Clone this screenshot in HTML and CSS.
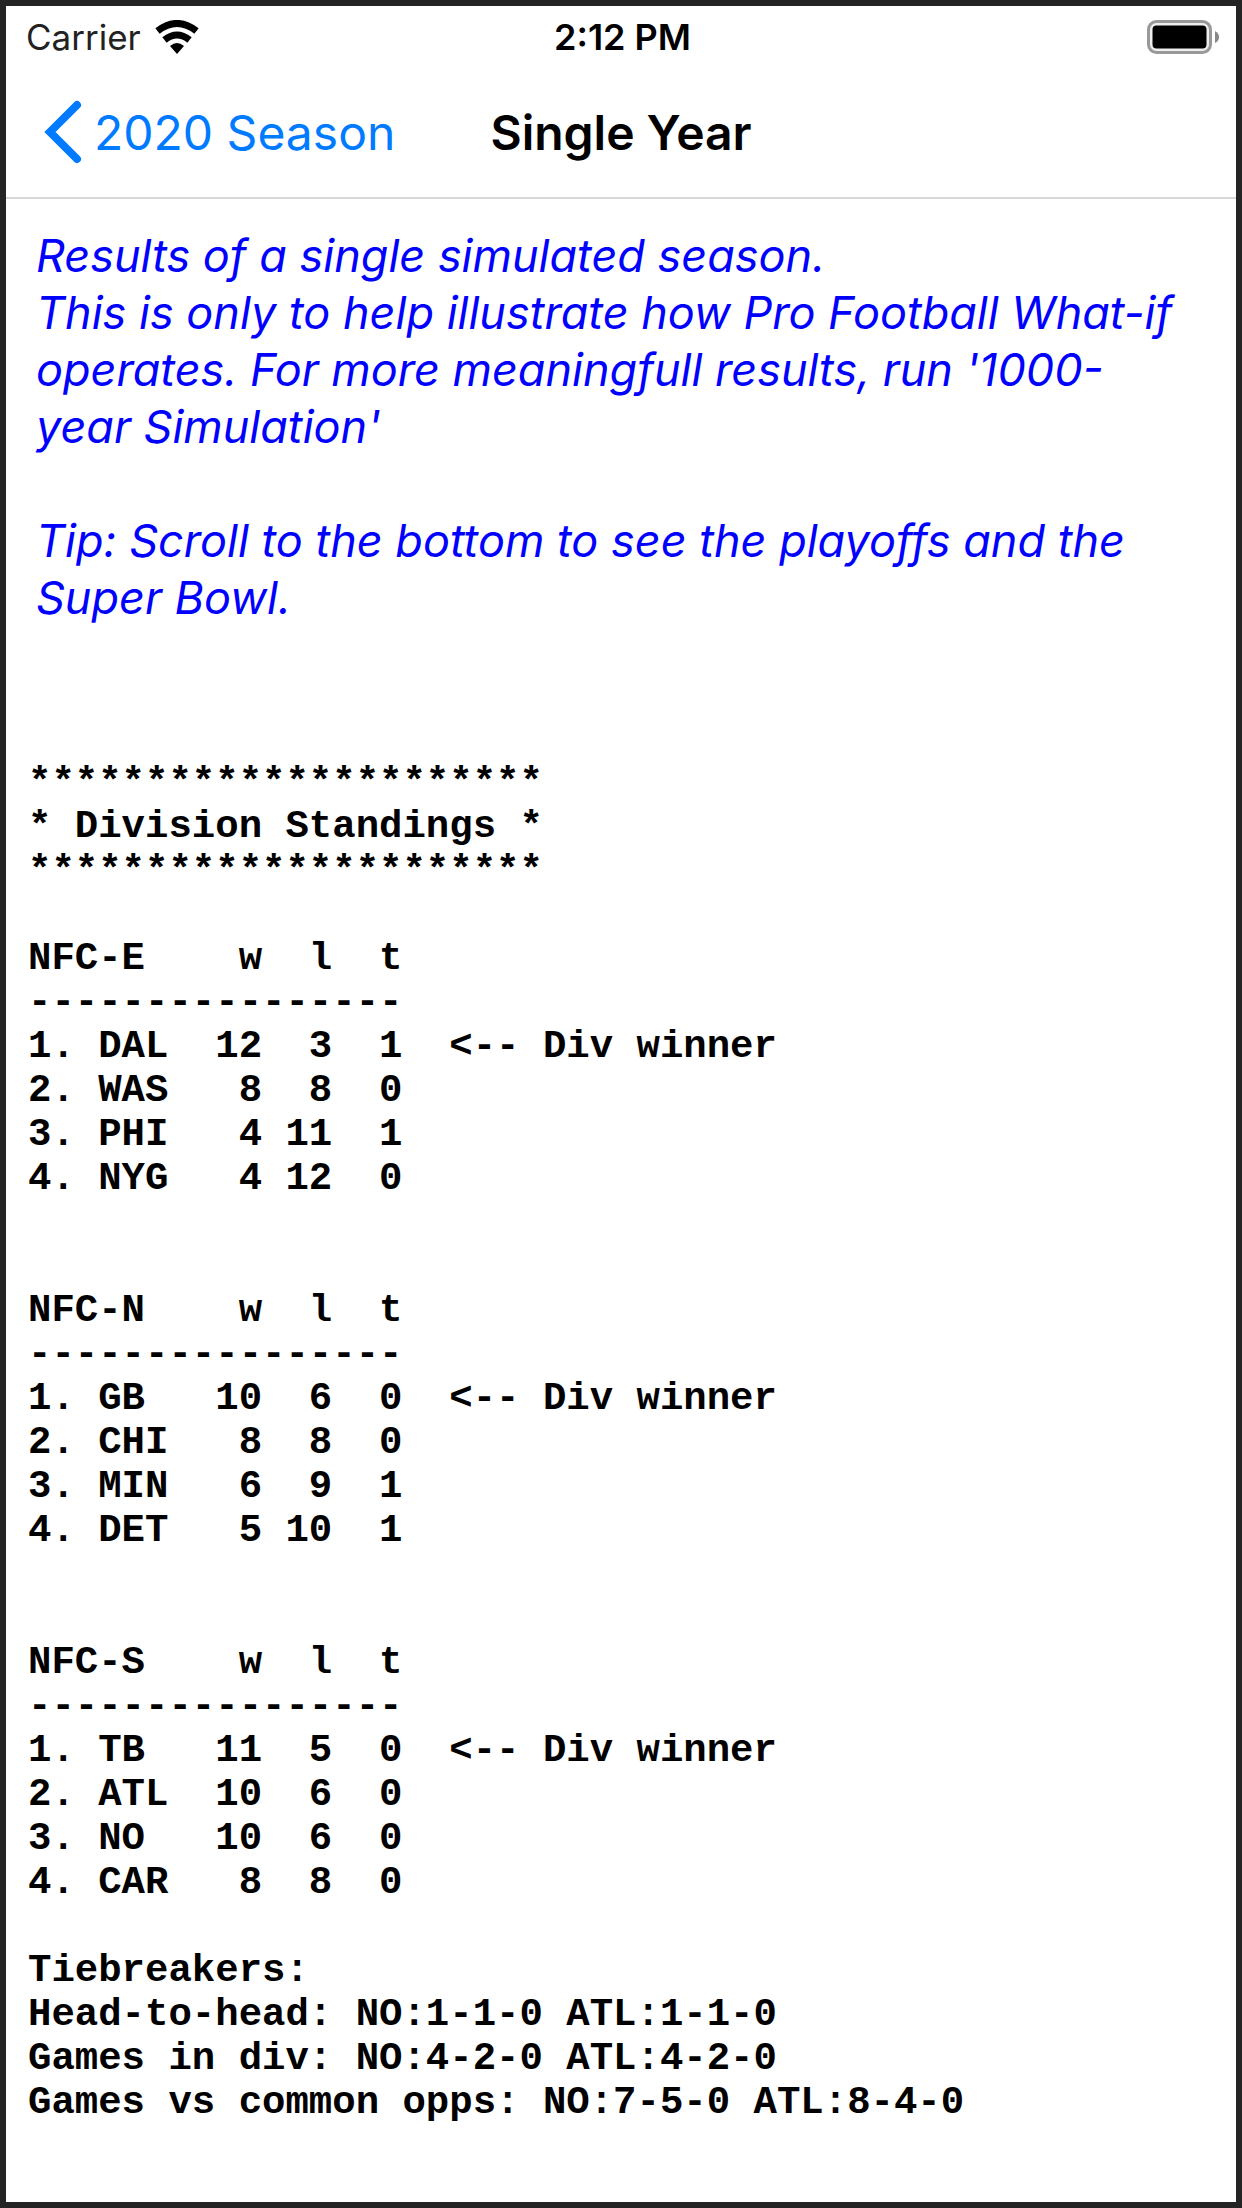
FILE: index.html
```html
<!DOCTYPE html>
<html lang="en">
<head>
<meta charset="utf-8">
<title>Single Year</title>
<meta name="viewport" content="width=device-width, initial-scale=1">
<link rel="stylesheet" href="styles.css">
</head>
<body>
<div class="screen">
  <div class="status">
    <div class="carrier">Carrier
      <svg class="wifi" viewBox="0 0 44 34" aria-hidden="true"><path d="M2.500 11Q22-4 41.500 11" fill="none" stroke="#000" stroke-width="7"/><path d="M9.500 20Q22 10 34.500 20" fill="none" stroke="#000" stroke-width="7"/><path d="M15 26Q22 20 29 26L22 34Z"/></svg>
    </div>
    <div class="time">2:12 PM</div>
    <svg class="battery" viewBox="0 0 72 34" aria-hidden="true"><rect x="1.500" y="1.500" width="62" height="31" rx="8" fill="#eee" stroke="#999" stroke-width="3"/><rect x="5.500" y="5.500" width="54" height="23" rx="4"/><path d="M68 11Q72 13 72 17T68 23Z" fill="#888"/></svg>
  </div>
  <header class="nav">
    <a class="back" href="#"><svg class="chevron" viewBox="0 0 38 64" aria-hidden="true"><path d="M33 5L6 32L33 59" fill="none" stroke="currentColor" stroke-width="8" stroke-linecap="round"/></svg>2020 Season</a>
    <h1 class="title">Single Year</h1>
  </header>
  <main class="content">
    <div class="intro">
      <p>Results of a single simulated season.<br>This is only to help illustrate how Pro Football What-if<br>operates. For more meaningfull results, run '1000-<br>year Simulation'</p>
      <p>Tip: Scroll to the bottom to see the playoffs and the<br>Super Bowl.</p>
    </div>
    <pre class="report">
**********************
* Division Standings *
**********************

NFC-E    w  l  t
----------------
1. DAL  12  3  1  &lt;-- Div winner
2. WAS   8  8  0
3. PHI   4 11  1
4. NYG   4 12  0


NFC-N    w  l  t
----------------
1. GB   10  6  0  &lt;-- Div winner
2. CHI   8  8  0
3. MIN   6  9  1
4. DET   5 10  1


NFC-S    w  l  t
----------------
1. TB   11  5  0  &lt;-- Div winner
2. ATL  10  6  0
3. NO   10  6  0
4. CAR   8  8  0

Tiebreakers:
Head-to-head: NO:1-1-0 ATL:1-1-0
Games in div: NO:4-2-0 ATL:4-2-0
Games vs common opps: NO:7-5-0 ATL:8-4-0</pre>
  </main>
</div>
</body>
</html>
```
FILE: styles.css
```css
* { box-sizing: border-box; }
body { margin: 0; background: #fff; color: #000; font-family: Inter, "Liberation Sans", sans-serif; }
.screen { min-height: 100vh; border: 6px solid #242424; }
.status { display: grid; grid-template-columns: 1fr auto 1fr; align-items: center; height: 61px; padding: 0 17px 0 20px; font-size: 35px; }
.carrier { display: flex; align-items: center; gap: 14px; color: #222; }
.wifi { width: 44px; height: 34px; }
.time { font-size: 36px; font-weight: 600; }
.battery { width: 72px; height: 34px; justify-self: end; }
.nav { display: grid; grid-template-columns: 1fr auto 1fr; align-items: center; height: 132px; padding: 0 38px; border-bottom: 2px solid #d8d8d8; }
.back { display: flex; align-items: center; gap: 12px; color: #007aff; font-size: 48px; text-decoration: none; white-space: nowrap; }
.chevron { width: 38px; height: 64px; }
.title { margin: 0; font-size: 48px; font-weight: 600; }
.content { padding: 28px 22px; }
.intro { padding-left: 8px; color: #00f; font-size: 45px; font-style: italic; line-height: 57px; }
.intro p { margin: 0 0 57px; white-space: nowrap; }
.report { margin: 135px 0 0; font-family: "Liberation Mono", monospace; font-size: 39px; font-weight: 700; line-height: 44px; }
```
